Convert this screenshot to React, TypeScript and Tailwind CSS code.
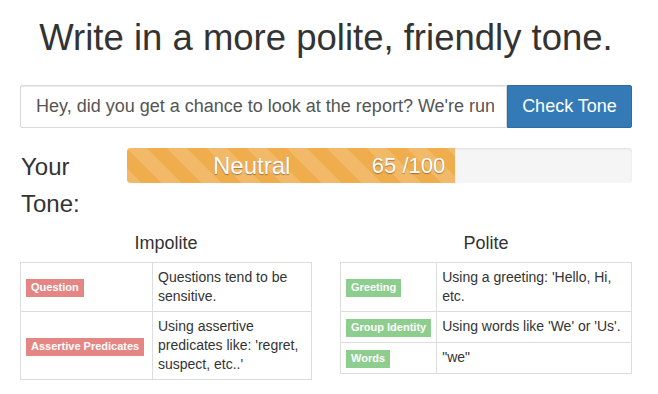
import React from 'react';

type Cue = { label: string; text: string };

const impolite: Cue[] = [
  { label: 'Question', text: 'Questions tend to be sensitive.' },
  { label: 'Assertive Predicates', text: "Using assertive predicates like: 'regret, suspect, etc..'" },
];

const polite: Cue[] = [
  { label: 'Greeting', text: "Using a greeting: 'Hello, Hi, etc." },
  { label: 'Group Identity', text: "Using words like 'We' or 'Us'." },
  { label: 'Words', text: '"we"' },
];

export default function App() {
  const score = 65;

  return (
    <div className="w-[658px] h-[394px] bg-white text-[#333] font-['Liberation_Sans',Arial,sans-serif] overflow-hidden">
      <div className="ml-[20px] w-[612px]">
        <h1 className="pt-[18px] text-[36.5px] leading-[40px] text-center">
          Write in a more polite, friendly tone.
        </h1>

        {/* Input group */}
        <div className="mt-[27px] flex h-[43px]">
          <input
            readOnly
            defaultValue="Hey, did you get a chance to look at the report? We're run"
            className="flex-1 min-w-0 h-full border border-[#d9d9d9] rounded-l-[2px] pl-[15px] pr-[12px] text-[18px] text-[#555] outline-none shadow-[inset_0_1px_1px_rgba(0,0,0,0.075)]"
          />
          <button className="w-[125px] h-full bg-[#337ab7] border border-[#2e6da4] rounded-r-[2px] text-white text-[18px]">
            Check Tone
          </button>
        </div>

        {/* Tone */}
        <div className="mt-[20px] flex">
          <div className="w-[107px] pl-[1px] text-[24px] leading-[37px]">
            Your
            <br />
            Tone:
          </div>
          <div className="flex-1 h-[35px] bg-[#f5f5f5] rounded-[4px] overflow-hidden shadow-[inset_0_1px_2px_rgba(0,0,0,0.1)]">
            <div
              className="h-full flex items-center justify-between pl-[86px] pr-[10px] bg-[#f0ad4e] bg-[linear-gradient(45deg,rgba(255,255,255,.15)_25%,transparent_25%,transparent_50%,rgba(255,255,255,.15)_50%,rgba(255,255,255,.15)_75%,transparent_75%,transparent)] bg-[length:40px_40px] text-white text-[24px] [text-shadow:0_1px_1px_rgba(0,0,0,0.35)]"
              style={{ width: `${score}%` }}
            >
              <span>Neutral</span>
              <span className="text-[22px]">{score} /100</span>
            </div>
          </div>
        </div>

        {/* Cue tables */}
        <div className="mt-[11px] grid grid-cols-2 gap-[28px]">
          <CueTable title="Impolite" cues={impolite} color="bg-[#e48784]" labelWidth="w-[132px]" />
          <CueTable title="Polite" cues={polite} color="bg-[#8dcd8d]" labelWidth="w-[95px]" />
        </div>
      </div>
    </div>
  );
}

function CueTable({ title, cues, color, labelWidth }: { title: string; cues: Cue[]; color: string; labelWidth: string }) {
  return (
    <div>
      <h4 className="text-[18px] leading-[20px] text-center">{title}</h4>
      <table className="mt-[9px] w-full border-collapse border border-[#ddd] text-[14px] leading-[19px]">
        <tbody>
          {cues.map((c) => (
            <tr key={c.label}>
              <td className={`${labelWidth} border border-[#ddd] p-[5px] align-middle whitespace-nowrap`}>
                <span className={`${color} inline-block px-[5px] pt-[3px] pb-[4px] text-[11px] leading-[11px] font-bold text-white`}>
                  {c.label}
                </span>
              </td>
              <td className="border border-[#ddd] p-[5px] align-top">{c.text}</td>
            </tr>
          ))}
        </tbody>
      </table>
    </div>
  );
}
